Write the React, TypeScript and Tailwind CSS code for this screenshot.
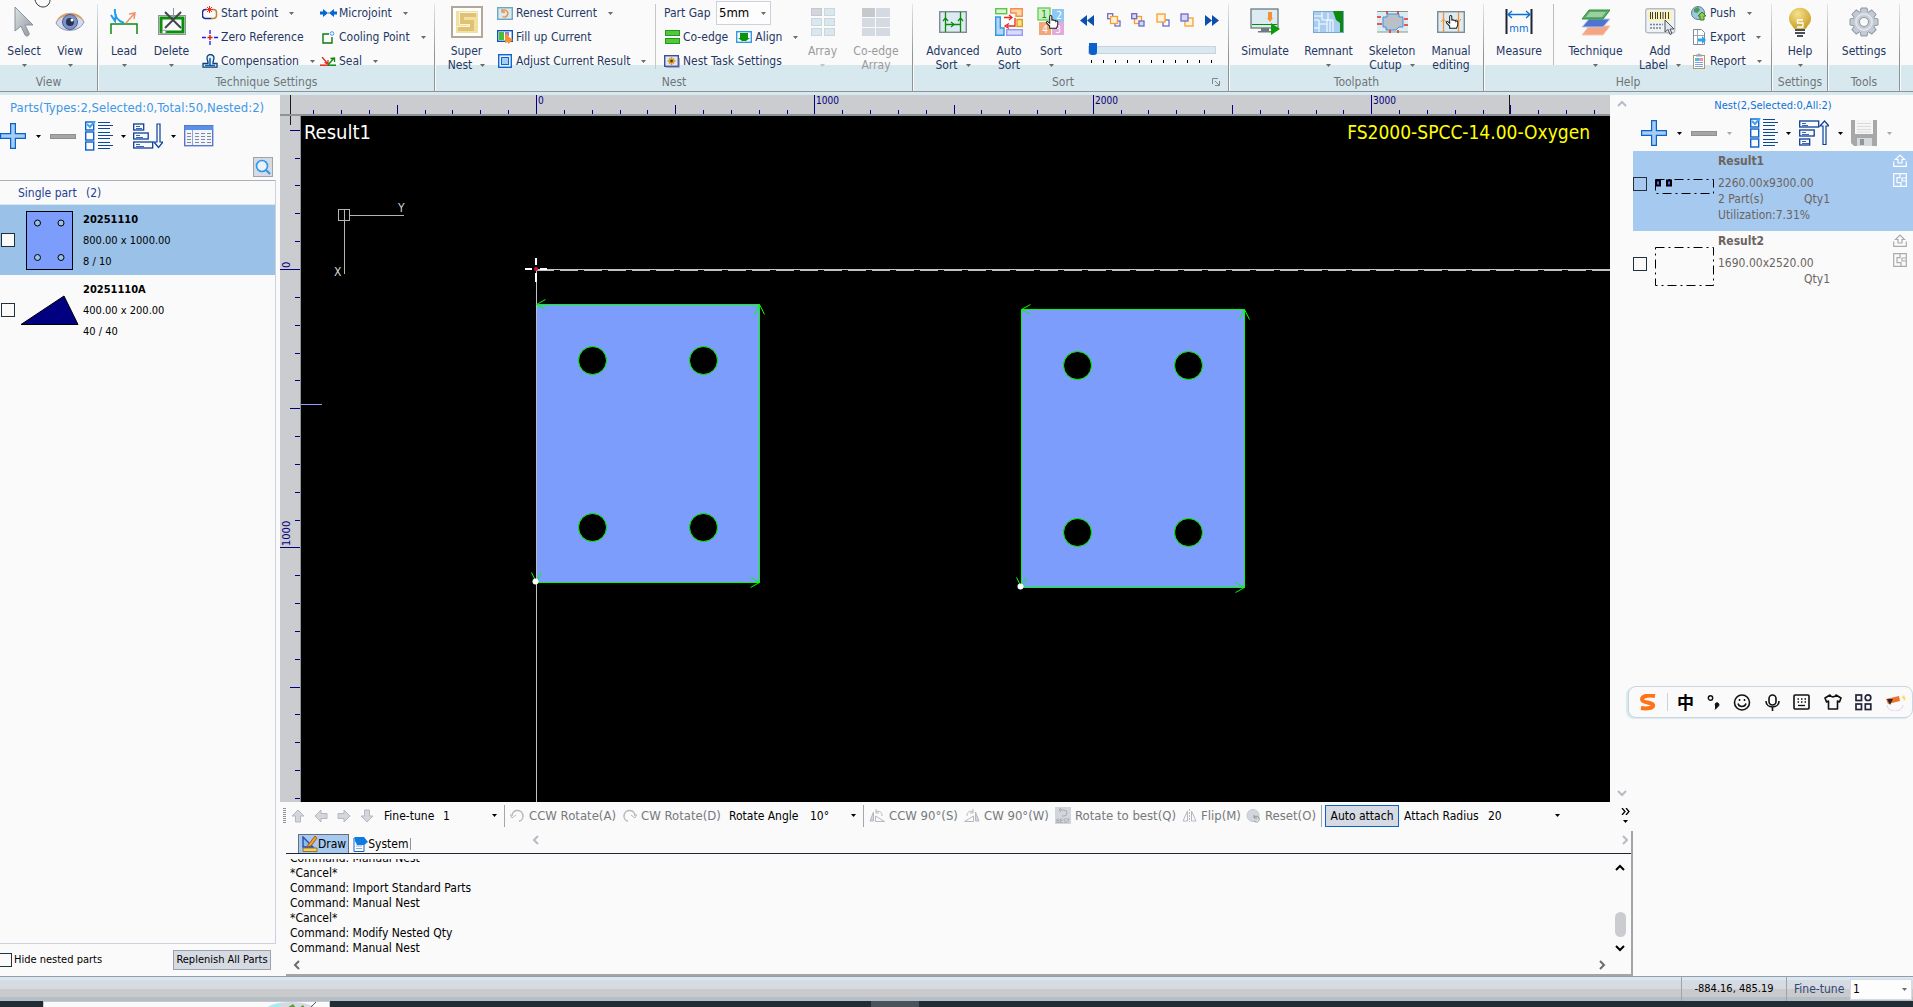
import React, { useId, useState } from 'react';

type Kids = { children?: React.ReactNode };

function Pic({ w, h, children }: { w: number; h: number } & Kids) {
  return (
    <svg width={w} height={h} viewBox={`0 0 ${w} ${h}`} fill="none" className="shrink-0" aria-hidden="true">
      {children}
    </svg>
  );
}

function Caret({ tone = 'text-[#6b6b6b]' }: { tone?: string }) {
  return (
    <svg width="5" height="3" viewBox="0 0 5 3" className={`shrink-0 ${tone}`} aria-hidden="true">
      <path d="M0 0h5L2.500 3z" fill="currentColor" />
    </svg>
  );
}

/* ---------- ribbon icons ---------- */

const CursorIcon = () => (
  <Pic w={20} h={32}>
    <defs>
      <linearGradient id="cur" x1="0" y1="0" x2="1" y2="1">
        <stop offset="0" stopColor="#dfe3e6" />
        <stop offset="1" stopColor="#8d959c" />
      </linearGradient>
    </defs>
    <path d="M1 1v24l6-5 4 9c1 2 5 1 4-2l-4-8h8z" fill="url(#cur)" stroke="#8a929a" />
  </Pic>
);

const EyeIcon = () => (
  <Pic w={30} h={24}>
    <path d="M1 13C6 2 23 1 29 12 25 22 7 24 1 13z" fill="#d5d9ee" stroke="#8c93b8" />
    <path d="M1 12C6 0 24 0 29 11 22 4 8 4 1 12z" fill="#d9a067" />
    <circle cx="15" cy="12" r="7.500" fill="#7c93c4" stroke="#4e5f92" />
    <circle cx="15" cy="12" r="4" fill="#26325c" />
    <circle cx="17" cy="10" r="1.500" fill="#fff" />
  </Pic>
);

const LeadIcon = () => (
  <Pic w={28} h={26}>
    <path d="M1 25V15h26v10" stroke="#0d8a0d" strokeWidth="1.500" />
    <path d="M5 0c-1 7 3 12 9 14M1 6l4 6 1-7" stroke="#1e9bf0" strokeWidth="2" />
    <path d="M16 14l8-9M19 5l6-1-1 6" stroke="#f0906a" strokeWidth="1.500" />
  </Pic>
);

const DeleteIcon = () => (
  <Pic w={30} h={28}>
    <rect x="1.500" y="7.500" width="27" height="19" stroke="#8e9499" />
    <rect x="4" y="10" width="22" height="14" stroke="#0a8f0a" strokeWidth="3" />
    <path d="M16.500 0v10" stroke="#8e9499" />
    <path d="M8 4l16 16M24 4L8 20" stroke="#3d464d" strokeWidth="2" />
    <circle cx="7" cy="24" r="2" fill="#fff" stroke="#8e9499" />
  </Pic>
);

const StartPointIcon = () => (
  <Pic w={16} h={14}>
    <path d="M5 3.500H3.500a3 3 0 0 0-3 3v3a3 3 0 0 0 3 3h6" stroke="#1b2f9a" strokeWidth="1.500" />
    <path d="M10 3.500h1.500a3 3 0 0 1 3 3v3a3 3 0 0 1-3 3H9" stroke="#b98a2c" strokeWidth="1.500" />
    <path d="M7.500 0v7M4 3.500h7M5 1l5 5M10 1L5 6" stroke="#f0281c" />
  </Pic>
);

const ZeroIcon = () => (
  <Pic w={16} h={15}>
    <path d="M8 0v4M8 11v4M0 7.500h4M12 7.500h4" stroke="#1a1aff" strokeWidth="1.300" />
    <path d="M8 5v5M5.500 7.500h5" stroke="#e81c1c" strokeWidth="1.500" />
  </Pic>
);

const CompensationIcon = () => (
  <Pic w={16} h={14}>
    <path d="M1 13.200h14V9.500h-4c0-3 1-4 1-5.500a3.500 3.500 0 0 0-7 0C5 5.500 6 6.500 6 9.500H1z" stroke="#0e3f78" strokeWidth="1.300" fill="#e3f1fb" />
    <path d="M3 11.500h10M8 11V4" stroke="#0e5fb0" strokeWidth="1.500" />
  </Pic>
);

const MicrojointIcon = () => (
  <Pic w={17} h={8}>
    <path d="M0 4h4M13 4h4" stroke="#0067d6" strokeWidth="3" />
    <path d="M3 0l5 4-5 4zM14 0L9 4l5 4z" fill="#0067d6" />
    <path d="M8 4h1" stroke="#f5a34b" strokeWidth="2" />
  </Pic>
);

const CoolingIcon = () => (
  <Pic w={17} h={13}>
    <path d="M9 3H3v9h9V6" stroke="#0d7a0d" strokeWidth="1.400" />
    <circle cx="12" cy="2.500" r="1.800" stroke="#3d9bf0" />
  </Pic>
);

const SealIcon = () => (
  <Pic w={17} h={9}>
    <path d="M0 8.200h8" stroke="#e8281c" strokeWidth="1.500" />
    <path d="M8 8.200h8" stroke="#0d8a0d" strokeWidth="1.500" />
    <path d="M2 0l6 7M4.500 5.500L8 7l0-4" stroke="#e8281c" strokeWidth="1.300" />
    <path d="M8 8l6-7M10.500 1.500L14.500 1v4" stroke="#0d8a0d" strokeWidth="1.300" />
  </Pic>
);

const SuperNestIcon = () => (
  <Pic w={32} h={32}>
    <rect x="1" y="1" width="30" height="30" fill="#fff" stroke="#b3a79c" strokeWidth="2" />
    <rect x="5" y="5" width="22" height="22" fill="#f3e0a0" />
    <path d="M25 9H11v7h10v7H7" stroke="#dfc274" strokeWidth="4" />
    <path d="M26 6.500H8.500v12h10v2H6" stroke="#fdf5d8" />
  </Pic>
);

const RenestIcon = () => (
  <Pic w={16} h={13}>
    <rect x=".7" y=".7" width="14.600" height="11.600" fill="#d9e9f0" stroke="#6aa9c4" strokeWidth="1.400" />
    <path d="M5.500 3.500a3.500 3.500 0 1 1 0 6M5 2v3h3" stroke="#f08a3c" strokeWidth="1.300" />
  </Pic>
);

const FillUpIcon = () => (
  <Pic w={16} h={14}>
    <rect x=".7" y=".7" width="14.600" height="10.600" fill="#fff" stroke="#0b55b5" strokeWidth="1.400" />
    <path d="M2 2h5v8H2z" fill="#49bf38" />
    <path d="M8 2h4v4H8z" fill="#8c7bea" />
    <path d="M8 5l3-2v9l-3 1zM11 6l5 4-5 4z" fill="#f59034" />
  </Pic>
);

const AdjustIcon = () => (
  <Pic w={16} h={14}>
    <rect x="1.700" y=".7" width="12.600" height="12.600" fill="#e8f2fc" stroke="#1166cc" strokeWidth="1.400" />
    <rect x="4.500" y="3.500" width="7" height="7" fill="#a6cdf2" stroke="#1166cc" />
  </Pic>
);

const CoEdgeIcon = () => (
  <Pic w={15} h={14}>
    <rect x=".5" y=".5" width="14" height="5" fill="#54c83a" stroke="#1f9a1f" />
    <rect x=".5" y="8.500" width="14" height="5" fill="#54c83a" stroke="#1f9a1f" />
  </Pic>
);

const AlignIcon = () => (
  <Pic w={16} h={12}>
    <rect x=".7" y=".7" width="14.600" height="10.600" fill="#fff" stroke="#2f97ea" strokeWidth="1.400" />
    <path d="M4 2h8v5h2l-4 3H6L2 7h2z" fill="#0a940a" />
  </Pic>
);

const NestTaskIcon = () => (
  <Pic w={16} h={13}>
    <rect x=".7" y=".7" width="13.600" height="10.600" fill="#dfe6f5" stroke="#3c4e9a" strokeWidth="1.400" />
    <path d="M2 12.300h13.300V3" stroke="#8f99c0" />
    <path d="M7.500 2v8M3.500 6h8M5 3.500l5 5M10 3.500l-5 5" stroke="#d79a1c" strokeWidth="1.600" />
    <circle cx="7.500" cy="6" r="1.300" fill="#5a3a10" />
  </Pic>
);

const ArrayIcon = () => (
  <Pic w={24} h={28}>
    <rect x=".5" y=".5" width="10" height="7" fill="#d3d6dc" stroke="#c4c8cf" />
    <rect x="13.500" y=".5" width="10" height="7" fill="#d7e9ee" stroke="#ccd6dc" />
    <rect x=".5" y="10.500" width="10" height="7" fill="#d7e9ee" stroke="#ccd6dc" />
    <rect x="13.500" y="10.500" width="10" height="7" fill="#d7e9ee" stroke="#ccd6dc" />
    <rect x=".5" y="20.500" width="10" height="7" fill="#d7e9ee" stroke="#ccd6dc" />
    <rect x="13.500" y="20.500" width="10" height="7" fill="#d7e9ee" stroke="#ccd6dc" />
  </Pic>
);

const CoEdgeArrayIcon = () => (
  <Pic w={28} h={28}>
    <path d="M0 0h28v28H0z" fill="#d5d9e2" />
    <path d="M0 0h14v9H0z" fill="#c6c8cc" />
    <path d="M13.500 0v28M0 9.500h28M0 19.500h28" stroke="#fafafa" />
  </Pic>
);

const AdvSortIcon = () => (
  <Pic w={28} h={22}>
    <rect x=".7" y=".7" width="26.600" height="20.600" fill="#dcebf1" stroke="#7e8a92" strokeWidth="1.400" />
    <path d="M6.500 1v20M21.500 1v20M6 13.500h15" stroke="#0d8a0d" strokeWidth="1.300" />
    <path d="M4 10l2.500-3L9 10M19 10l2.500-3 2.500 3M12 11l3 2.500-3 2.500" stroke="#0d8a0d" strokeWidth="1.200" />
  </Pic>
);

const AutoSortIcon = () => (
  <Pic w={28} h={28}>
    <rect x=".7" y=".7" width="11" height="5" fill="#d7f5d0" stroke="#5cc84a" strokeWidth="1.400" />
    <path d="M15.700.7h11.600v7.600H21V5h-5.300z" fill="#ffd3a8" stroke="#f58f4a" strokeWidth="1.400" />
    <path d="M.7 9h4.600v11H9v7.300H.7z" fill="#b5d6f5" stroke="#2f97ea" strokeWidth="1.400" />
    <rect x="22" y="11.500" width="5.300" height="7" fill="#ffe08a" stroke="#d9a01c" strokeWidth="1.400" />
    <rect x="11.700" y="21.700" width="15.600" height="5.600" fill="#d8dcf8" stroke="#9a9af0" strokeWidth="1.400" />
    <path d="M9 9.500h8M14 7l3 2.500-3 2.500M20 10v8h-8M14 15.500L10 18l4 2.500" stroke="#e8281c" strokeWidth="1.300" />
  </Pic>
);

const HandShape = () => (
  <path
    d="M5.500 15.500V13L2 9.500c-1-1.500.5-2.500 1.700-1.500L5.500 9.500V2c0-2 2.500-2 2.500 0v4.500c.5-1.500 2.500-1.200 2.500.3.500-1 2.300-.8 2.300.6.700-.8 2.200-.3 2.200 1V12l-1.500 3.500z"
    fill="#fff"
    stroke="#1c1c1c"
    strokeWidth="1.200"
  />
);

const SortIcon = () => (
  <Pic w={28} h={30}>
    <rect x="15" y="2" width="12" height="13" fill="#8cc8f2" />
    <rect x="2" y="15" width="12" height="13" fill="#f0a878" />
    <rect x="15" y="15" width="12" height="13" fill="#e3a8dc" />
    <rect x="1" y="1" width="12" height="12" fill="#c8f0c0" stroke="#6ad05a" strokeWidth="1.400" />
    <g fontSize="10" textAnchor="middle">
      <text x="7" y="11" fill="#1c8a1c">1</text>
      <text x="22" y="12" fill="#fff">2</text>
      <text x="8" y="26" fill="#fff">4</text>
      <text x="21" y="26" fill="#fff">3</text>
    </g>
    <g transform="translate(8 8) scale(.85)"><HandShape /></g>
  </Pic>
);

const SimulateIcon = () => (
  <Pic w={30} h={28}>
    <rect x="1" y="1" width="27" height="19" fill="#dcebf1" stroke="#6f7a82" strokeWidth="1.300" />
    <path d="M2 16.500h25" stroke="#0d8a0d" />
    <path d="M18 4h4v6h-4zM17 10h6l-3 4z" fill="#f59034" />
    <path d="M11 20h8v3h-8zM8 23h14v1.500H8z" fill="#6f7a82" />
    <path d="M21 15l9 6-9 6z" fill="#0d9a0d" />
  </Pic>
);

const RemnantIcon = () => (
  <Pic w={31} h={22}>
    <rect x=".5" y=".5" width="30" height="21" fill="#a9cdf0" stroke="#7aa7d0" />
    <path d="M20 0h10v21h-3V12l-4-3z" fill="#0d8a0d" />
    <path d="M1 5h8V1M9 5v4h6V2M1 9h5v12M6 13h8v8M14 13V9h6v12M1 17h5M17 9v12" stroke="#fff" />
  </Pic>
);

const SkeletonIcon = () => (
  <Pic w={31} h={22}>
    <path d="M0 .7h31v20H0z" fill="#dcebf1" />
    <path d="M0 .5h31M0 21h31" stroke="#7d9a8a" />
    <path d="M6 6h4V3h12v3h4v10h-4l-3 3H9V16H6z" fill="#b9c0c8" stroke="#3f8fe0" />
    <path d="M0 6h4M0 13h5M27 8h4M27 14h4M10 0v3M21 19v3M13 19v3M21 0v3" stroke="#e8281c" strokeWidth="1.500" />
  </Pic>
);

const ManualIcon = () => (
  <Pic w={28} h={22}>
    <rect x=".7" y=".7" width="26.600" height="20.600" fill="#dcebf1" stroke="#7e8a92" strokeWidth="1.400" />
    <path d="M6.500 1v20M21.500 1v20" stroke="#f59034" strokeWidth="1.300" />
    <path d="M4 11l2.500-3L9 11M19 8l2.500 3L24 8" stroke="#f59034" />
    <g transform="translate(8 4) scale(.85)"><HandShape /></g>
  </Pic>
);

const MeasureIcon = () => (
  <Pic w={28} h={26}>
    <path d="M1.500 0v25M26.500 0v25" stroke="#1c2530" strokeWidth="2" />
    <path d="M3 5.500h22M7 2L3 5.500 7 9M21 2l4 3.500L21 9" stroke="#0b6fd6" strokeWidth="1.300" />
    <text x="14" y="23" fontSize="11" fill="#0b6fd6" textAnchor="middle">mm</text>
  </Pic>
);

const LayersIcon = () => (
  <Pic w={30} h={27}>
    <path d="M8 17h21l-7 9H1z" fill="#f5a583" stroke="#f2c6b2" />
    <path d="M8 10h21l-7 8H1z" fill="#4f74cf" stroke="#b9c8ef" />
    <path d="M8 1h21l-7 9H1z" fill="#58ad62" stroke="#2f8f43" />
    <path d="M9 3h16l-4 5H5z" fill="#9ad0a0" />
  </Pic>
);

const AddLabelIcon = () => (
  <Pic w={31} h={28}>
    <rect x=".7" y=".7" width="29" height="24" rx="2" fill="#eef2f5" stroke="#b5bcc4" strokeWidth="1.400" />
    <rect x="3" y="3" width="24" height="10" fill="#fbf2b8" />
    <path d="M5.500 4v7M7.500 4v7M10.500 4v7M12.500 4v7M15.500 4v7M18 4v7M20.500 4v7M23.500 4v7" stroke="#3a3a3a" />
    <path d="M5 16.500h13M5 20h12" stroke="#6d8798" strokeWidth="1.500" strokeDasharray="2 1" />
    <path d="M20 12v12l3-2.500 2 5 2-1-2-4.500h4z" fill="#e3e6ea" stroke="#4a525a" />
  </Pic>
);

const PushIcon = () => (
  <Pic w={16} h={15}>
    <circle cx="7" cy="7" r="6.500" fill="#9cc7e0" stroke="#5a7f95" />
    <path d="M3 3l4-2 2 3-3 3-3-1zM8 8l4-1 1 3-3 3z" fill="#4f9a4a" />
    <path d="M11 6l4 4h-2v4h-4v-4H7z" fill="#8ccf4d" stroke="#3e7a24" />
  </Pic>
);

const ExportIcon = () => (
  <Pic w={16} h={16}>
    <path d="M2.500.5h8l3 3v12h-11z" fill="#fff" stroke="#7f8a96" />
    <path d="M3 6.500h10M6.500 1v14" stroke="#9aa5b5" />
    <path d="M7 9.500h4V7l4 4-4 4v-2.500H7z" fill="#27a5ee" />
  </Pic>
);

const ReportIcon = () => (
  <Pic w={14} h={16}>
    <rect x="1.500" y="2.500" width="11" height="13" fill="#fff" stroke="#b09a5c" />
    <path d="M4 3.500h6V1.500H8L7 0 6 1.500H4z" fill="#9aa2aa" />
    <path d="M3 5h4v3H3z" fill="#3fc6e0" /><path d="M7 5h4v3H7z" fill="#ee8fd0" />
    <path d="M3 9.500h8M3 11.500h8M3 13.500h8" stroke="#7fa4dd" />
  </Pic>
);

const BulbIcon = () => (
  <Pic w={24} h={31}>
    <defs>
      <radialGradient id="bulb" cx=".4" cy=".3" r=".8">
        <stop offset="0" stopColor="#f5e28c" /><stop offset="1" stopColor="#c79a1c" />
      </radialGradient>
    </defs>
    <path d="M12 .7a11 11 0 0 1 11 11c0 5-4 7-5 10H6c-1-3-5-5-5-10A11 11 0 0 1 12 .7z" fill="url(#bulb)" />
    <path d="M15 13H9.500v3H15v4H9" stroke="#fff" strokeWidth="1.300" />
    <path d="M7 23h10M7 26h10M9 29h6" stroke="#4a4f55" strokeWidth="2" />
  </Pic>
);

const GearIcon = () => (
  <Pic w={30} h={30}>
    <g fill="#c3cad3" stroke="#8f98a4">
      {[0, 45, 90, 135].map((a) => (
        <path key={a} d="M12 1h6l1 5v18l-1 5h-6l-1-5V6z" transform={`rotate(${a} 15 15)`} />
      ))}
    </g>
    <circle cx="15" cy="15" r="10.500" fill="#c3cad3" />
    <circle cx="15" cy="15" r="8" stroke="#dfe4ea" strokeWidth="2" />
    <circle cx="15" cy="15" r="4.500" fill="#fafafa" stroke="#8f98a4" />
  </Pic>
);

/* ---------- ribbon building blocks ---------- */

function Big({ w, icon, label, second, caret, disabled }: { w: string; icon: React.ReactNode; label: string; second?: string; caret?: boolean; disabled?: boolean }) {
  return (
    <button type="button" disabled={disabled} className={`flex shrink-0 flex-col items-center whitespace-nowrap leading-[14px] ${w} ${disabled ? 'text-[#9a9a9a]' : 'text-[#1f3864]'}`}>
      <span className="flex h-11 items-center justify-center">{icon}</span>
      <span>{label}</span>
      <span className="flex h-[14px] items-center gap-2">
        {second && <span>{second}</span>}
        {caret && <Caret tone={disabled ? 'text-[#c4c4c4]' : 'text-[#6b6b6b]'} />}
      </span>
    </button>
  );
}

function Small({ icon, label, caret }: { icon: React.ReactNode; label: string; caret?: boolean }) {
  return (
    <button type="button" className="flex h-6 items-center whitespace-nowrap text-[#1f3864]">
      <span className="mr-[3px] flex w-4 shrink-0 justify-center">{icon}</span>
      <span>{label}</span>
      {caret && <span className="ml-[11px]"><Caret /></span>}
    </button>
  );
}

function Group({ w, label, extra, children }: { w: string; label: string; extra?: React.ReactNode } & Kids) {
  return (
    <section aria-label={label} className={`flex shrink-0 ${w}`}>
      <div className="flex min-w-0 flex-1 flex-col bg-[linear-gradient(to_bottom,#fafafa_65px,#d7e9ee_65px)]">
        <div className="flex h-[73px]">{children}</div>
        <div className="flex h-[18px] items-center justify-center text-[#6f7479]">
          <span className={extra ? 'flex-1 text-center' : ''}>{label}</span>
          {extra}
        </div>
      </div>
      <div className="mr-px mt-1 w-px bg-[linear-gradient(to_bottom,#dfe8ec,#8f9296_60%)]" />
    </section>
  );
}

const Tiles = ({ back, two }: { back?: boolean; two?: boolean }) => (
  <Pic w={14} h={14}>
    {two && back ? (
      <>
        <rect x="3.500" y="3.500" width="7" height="7" fill="#fff3d8" stroke="#f5a030" strokeWidth="1.300" />
        <rect x=".7" y=".7" width="5" height="5" fill="#d8d8f5" stroke="#6a6ad0" strokeWidth="1.300" />
        <rect x="8" y="8" width="5" height="5" fill="#d8d8f5" stroke="#6a6ad0" strokeWidth="1.300" />
      </>
    ) : two ? (
      <>
        <rect x=".7" y=".7" width="5" height="5" fill="#fff" stroke="#6a6ad0" strokeWidth="1.300" />
        <rect x="8" y="8" width="5" height="5" fill="#fff" stroke="#6a6ad0" strokeWidth="1.300" />
        <rect x="3.500" y="3.500" width="7" height="7" fill="#fff3d8" stroke="#f5a030" strokeWidth="1.300" />
      </>
    ) : back ? (
      <>
        <rect x="5" y="5" width="8" height="8" fill="#fff3d8" stroke="#f5a030" strokeWidth="1.300" />
        <rect x="1" y="1" width="7" height="7" fill="#d8d8f5" stroke="#6a6ad0" strokeWidth="1.300" />
      </>
    ) : (
      <>
        <rect x="7" y="7" width="6" height="6" fill="#fff" stroke="#6a6ad0" strokeWidth="1.300" />
        <rect x="1" y="1" width="8" height="8" fill="#fff3d8" stroke="#f5a030" strokeWidth="1.300" />
      </>
    )}
  </Pic>
);

const Double = ({ right }: { right?: boolean }) => (
  <Pic w={14} h={11}>
    <path d={right ? 'M0 0l7 5.500L0 11zM7 0l7 5.500L7 11z' : 'M7 0L0 5.500 7 11zM14 0L7 5.500l7 5.500z'} fill="#0b4fb0" />
  </Pic>
);

function Choice({ label, labelClass, value, className, tone }: { label: string; labelClass: string; value: string; className: string; tone?: string }) {
  const id = useId();
  return (
    <>
      <label htmlFor={id} className={`shrink-0 whitespace-nowrap ${labelClass}`}>{label}</label>
      <span className={`relative flex shrink-0 items-center ${className}`}>
        <select id={id} defaultValue={value} className="h-full w-full appearance-none bg-transparent outline-none">
          <option>{value}</option>
        </select>
        <span className="pointer-events-none absolute right-1"><Caret tone={tone ?? 'text-black'} /></span>
      </span>
    </>
  );
}

function Ribbon() {
  return (
    <header className="flex h-[92px] overflow-hidden border-b border-[#8f9296] bg-[#fafafa] text-[12px]">
      <Group w="w-[99px]" label="View">
        <Big w="w-12" icon={<CursorIcon />} label="Select" caret />
        <Big w="w-11" icon={<EyeIcon />} label="View" caret />
      </Group>
      <Group w="w-[337px]" label="Technique Settings">
        <Big w="w-[50px]" icon={<LeadIcon />} label="Lead" caret />
        <Big w="w-[45px]" icon={<DeleteIcon />} label="Delete" caret />
        <div className="ml-2 flex w-[118px] flex-col items-start pt-px">
          <Small icon={<StartPointIcon />} label="Start point" caret />
          <Small icon={<ZeroIcon />} label="Zero Reference" />
          <Small icon={<CompensationIcon />} label="Compensation" caret />
        </div>
        <div className="flex flex-col items-start pt-px">
          <Small icon={<MicrojointIcon />} label="Microjoint" caret />
          <Small icon={<CoolingIcon />} label="Cooling Point" caret />
          <Small icon={<SealIcon />} label="Seal" caret />
        </div>
      </Group>
      <Group w="w-[478px]" label="Nest">
        <Big w="w-[61px]" icon={<SuperNestIcon />} label="Super" second="Nest" caret />
        <div className="flex w-[158px] flex-col items-start pt-px">
          <Small icon={<RenestIcon />} label="Renest Current" caret />
          <Small icon={<FillUpIcon />} label="Fill up Current" />
          <Small icon={<AdjustIcon />} label="Adjust Current Result" caret />
        </div>
        <div className="my-1 mr-2 w-px bg-[#c3c8cc]" />
        <div className="flex w-[136px] flex-col pt-px text-[#1f3864]">
          <div className="flex h-6 items-center">
            <Choice label="Part Gap" labelClass="w-[52px]" value="5mm" tone="text-[#6b6b6b]" className="h-6 w-[55px] border border-[#ccd2dc] bg-[#fdfdfd] pl-[2px] text-[13px] text-black" />
          </div>
          <div className="flex gap-2">
            <Small icon={<CoEdgeIcon />} label="Co-edge" />
            <Small icon={<AlignIcon />} label="Align" caret />
          </div>
          <div className="flex"><Small icon={<NestTaskIcon />} label="Nest Task Settings" /></div>
        </div>
        <Big w="w-[45px]" icon={<ArrayIcon />} label="Array" caret disabled />
        <Big w="w-[62px]" icon={<CoEdgeArrayIcon />} label="Co-edge" second="Array" disabled />
      </Group>
      <Group
        w="w-[316px]"
        label="Sort"
        extra={
          <button type="button" aria-label="Sort options" className="mr-2">
            <Pic w={8} h={8}><path d="M.5 6V.5H6M3 3l4 4M7.500 3v4.500H3" stroke="#7f858a" /></Pic>
          </button>
        }
      >
        <Big w="w-[78px]" icon={<AdvSortIcon />} label="Advanced" second="Sort" caret />
        <Big w="w-[34px]" icon={<AutoSortIcon />} label="Auto" second="Sort" />
        <Big w="w-[50px]" icon={<SortIcon />} label="Sort" caret />
        <div className="ml-1 flex w-[139px] flex-col">
          <div className="flex h-10 items-center justify-between">
            <button type="button" aria-label="First" className="mr-[2px]"><Double /></button>
            <button type="button" aria-label="Back one step"><Tiles two /></button>
            <button type="button" aria-label="Back"><Tiles two back /></button>
            <button type="button" aria-label="Forward"><Tiles /></button>
            <button type="button" aria-label="Forward one step"><Tiles back /></button>
            <button type="button" aria-label="Last"><Double right /></button>
          </div>
          <input
            type="range"
            aria-label="Sort position"
            min="0"
            max="10"
            defaultValue="0"
            className="ml-2 mt-[3px] h-[13px] w-[128px] appearance-none bg-transparent [&::-webkit-slider-runnable-track]:h-2 [&::-webkit-slider-runnable-track]:border [&::-webkit-slider-runnable-track]:border-[#ccd2dc] [&::-webkit-slider-runnable-track]:bg-[#d7e9ee] [&::-webkit-slider-thumb]:mt-[-4px] [&::-webkit-slider-thumb]:h-3 [&::-webkit-slider-thumb]:w-2 [&::-webkit-slider-thumb]:appearance-none [&::-webkit-slider-thumb]:rounded-b-[3px] [&::-webkit-slider-thumb]:bg-[#0b62cc]"
          />
          <div className="ml-[11px] mt-1 flex w-[121px] justify-between">
            {Array.from({ length: 11 }, (_, i) => <span key={i} className="h-[3px] w-px bg-black" />)}
          </div>
        </div>
      </Group>
      <Group w="w-[255px]" label="Toolpath">
        <Big w="w-[70px]" icon={<SimulateIcon />} label="Simulate" />
        <Big w="w-[57px]" icon={<RemnantIcon />} label="Remnant" caret />
        <Big w="w-[70px]" icon={<SkeletonIcon />} label="Skeleton" second="Cutup" caret />
        <Big w="w-12" icon={<ManualIcon />} label="Manual" second="editing" />
      </Group>
      <Group w="w-[288px]" label="Help">
        <Big w="w-[68px]" icon={<MeasureIcon />} label="Measure" />
        <div className="mb-2 mt-1 w-px bg-[#b9bec2]" />
        <Big w="w-[83px]" icon={<LayersIcon />} label="Technique" caret />
        <Big w="w-[46px]" icon={<AddLabelIcon />} label="Add" second="Label" caret />
        <div className="ml-2 flex flex-col items-start pt-px">
          <Small icon={<PushIcon />} label="Push" caret />
          <Small icon={<ExportIcon />} label="Export" caret />
          <Small icon={<ReportIcon />} label="Report" caret />
        </div>
      </Group>
      <Group w="w-[56px]" label="Settings">
        <Big w="w-[54px]" icon={<BulbIcon />} label="Help" caret />
      </Group>
      <Group w="w-[72px]" label="Tools">
        <Big w="w-[70px]" icon={<GearIcon />} label="Settings" />
      </Group>
      <div className="flex-1 bg-[linear-gradient(to_bottom,#fafafa_65px,#d7e9ee_65px)]" />
    </header>
  );
}

/* ---------- side-panel icons ---------- */

const Plus = () => (
  <Pic w={26} h={26}><path d="M10.600.6h4.800v10h10v4.800h-10v10h-4.800v-10h-10v-4.800h10z" fill="#a6cdf2" stroke="#0b62cc" strokeWidth="1.200" /></Pic>
);
const Minus = () => <Pic w={26} h={5}><rect x=".5" y=".5" width="25" height="4" fill="#a6a6a6" stroke="#909090" /></Pic>;
const Checklist = () => (
  <Pic w={28} h={30}>
    {[1, 11, 21].map((y) => (
      <g key={y}>
        <rect x=".7" y={y} width="8" height="8" stroke="#0b62cc" strokeWidth="1.400" />
        <path d={`M13 ${y + 0.5}h12M13 ${y + 3.5}h15M13 ${y + 6.5}h12`} stroke="#0b4a94" />
      </g>
    ))}
    <path d="M2 3l3 3 5-6" stroke="#3fa3ee" strokeWidth="2" />
  </Pic>
);
const SortBars = ({ up }: { up?: boolean }) => (
  <Pic w={30} h={26}>
    {[0, 1, 2].map((i) => {
      const w = up ? 19 - i * 4.5 : 10 + i * 4.5;
      return (
        <g key={i} stroke="#0b3f9c">
          <rect x=".7" y={1 + i * 9} width={w} height="6" strokeWidth="1.300" />
          <path d={`M3 ${3.5 + i * 9}h4M3 ${5.5 + i * 9}h${6 + i}`} strokeWidth=".8" />
        </g>
      );
    })}
    {up ? (
      <path d="M24 24.500V6h-3l4.500-5L30 6h-3v18.500z" stroke="#0b3f9c" strokeWidth="1.200" />
    ) : (
      <path d="M24 1v18h-3l4.500 5.500L30 19h-3V1z" stroke="#0b3f9c" strokeWidth="1.200" />
    )}
  </Pic>
);
const TableIcon = () => (
  <Pic w={30} h={22}>
    <rect x=".7" y=".7" width="28" height="20" fill="#f2f5fb" stroke="#5a78c8" strokeWidth="1.400" />
    <path d="M1 1h28v4H1z" fill="#5a8fea" />
    <path d="M8.500 5v15" stroke="#8fa3d8" />
    <path d="M3 8.500h4M3 11.500h4M3 14.500h4M3 17.500h4M11 8.500h4M17 8.500h4M23 8.500h4M11 11.500h4M17 11.500h4M23 11.500h4M11 14.500h4M17 14.500h4M23 14.500h4M11 17.500h4M17 17.500h4M23 17.500h4" stroke="#7f8798" />
  </Pic>
);
const SaveIcon = () => (
  <Pic w={26} h={26}>
    <path d="M0 0h26v26H3l-3-3z" fill="#a8a8a8" />
    <path d="M4 0h18v14H4z" fill="#f6f6f6" />
    <path d="M6 3.500h14M6 6.500h14M6 9.500h14M6 12h14" stroke="#dadada" />
    <path d="M6 18h15v8H6z" fill="#d3d9dd" />
    <path d="M9 19h4v6H9z" fill="#8f979c" />
  </Pic>
);

const CheckBox = ({ label }: { label: string }) => (
  <input type="checkbox" aria-label={label} className="h-[14px] w-[14px] shrink-0 appearance-none border border-[#23303a] bg-transparent checked:bg-[#0b62cc]" />
);

function ToolDrop({ label, gap = 'w-[24px]', tone = 'text-black', children }: { label: string; gap?: string; tone?: string } & Kids) {
  return (
    <button type="button" aria-label={label} className="flex h-8 shrink-0 items-center">
      {children}
      <span className={`flex justify-center ${gap}`}><Caret tone={tone} /></span>
    </button>
  );
}

function PartsPanel() {
  return (
    <aside className="flex w-[276px] shrink-0 flex-col overflow-hidden">
      <h2 className="h-[25px] pl-[10px] text-[13px] leading-[26px] text-[#3f97e8]">Parts(Types:2,Selected:0,Total:50,Nested:2)</h2>
      <div className="flex h-8 items-center">
        <ToolDrop label="Add part"><Plus /></ToolDrop>
        <button type="button" aria-label="Remove part" className="mr-[9px]"><Minus /></button>
        <ToolDrop label="Select parts" gap="w-5"><Checklist /></ToolDrop>
        <ToolDrop label="Sort parts" gap="w-[21px]"><SortBars /></ToolDrop>
        <button type="button" aria-label="Table view"><TableIcon /></button>
      </div>
      <div className="flex justify-end pr-[3px] pt-[5px] pb-[3px]">
        <button type="button" aria-label="Search" className="flex h-5 w-5 items-center justify-center border border-[#a0a4a8] bg-[#d5dae3]">
          <Pic w={16} h={16}><circle cx="7" cy="7" r="5.500" stroke="#2f97ea" strokeWidth="1.600" fill="#eaf3fb" /><path d="M11 11l4 4" stroke="#2f97ea" strokeWidth="2" /></Pic>
        </button>
      </div>
      <div className="flex min-h-0 flex-1 flex-col border-r border-b border-t border-[#ccd2dc] border-t-[#a9b2ba] text-[11px]">
        <div className="flex h-6 items-center gap-3 border-b border-[#d7e9ee] pl-[18px] text-[12px] text-[#1f3f94]">
          <span className="w-14 whitespace-nowrap">Single part</span><span>(2)</span>
        </div>
        <ul>
          <li className="flex h-[70px] items-center bg-[#9ac1e8] pl-px">
            <span className="flex bg-[#fafafa]"><CheckBox label="20251110" /></span>
            <span className="ml-[11px] mr-[10px] flex">
              <Pic w={47} h={59}>
                <rect x=".5" y=".5" width="46" height="58" fill="#7d9dfd" stroke="#000" />
                {[[11.5, 12], [35, 12], [11.5, 46.5], [35, 46.5]].map(([x, y]) => <circle key={`${x}-${y}`} cx={x} cy={y} r="3" fill="#9ac1e8" stroke="#000" />)}
              </Pic>
            </span>
            <PartText name="20251110" size="800.00 x 1000.00" count="8 / 10" />
          </li>
          <li className="flex h-[70px] items-center pl-px">
            <CheckBox label="20251110A" />
            <span className="mr-1 ml-[5px] flex">
              <Pic w={59} h={30}><path d="M1 29.500L44 1l14 28.500z" fill="#000080" stroke="#000" /></Pic>
            </span>
            <PartText name="20251110A" size="400.00 x 200.00" count="40 / 40" />
          </li>
        </ul>
      </div>
      <div className="flex h-8 items-center justify-between pr-[5px] text-[11px]">
        <label className="flex items-center gap-[2px] whitespace-nowrap">
          <input type="checkbox" className="ml-[-2px] h-[14px] w-[14px] appearance-none border border-[#23303a] checked:bg-[#0b62cc]" />
          Hide nested parts
        </label>
        <button type="button" className="h-5 w-[98px] whitespace-nowrap border border-[#9fa3a7] bg-[#d5dae3]">Replenish All Parts</button>
      </div>
    </aside>
  );
}

function PartText({ name, size, count }: { name: string; size: string; count: string }) {
  return (
    <div className="leading-[21px] text-black">
      <div className="font-bold">{name}</div>
      <div>{size}</div>
      <div>{count}</div>
    </div>
  );
}

/* ---------- drawing area ---------- */

const UNIT = 27.84;
const steps = (from: number, to: number) => Array.from({ length: to - from + 1 }, (_, i) => from + i);

function TopRuler() {
  return (
    <svg className="block h-[21px] w-full border-b-2 border-[#8f9296] bg-[#cbcccf]" aria-hidden="true">
      {steps(-8, 38).map((n) => {
        const x = Math.round(256 + n * UNIT);
        const len = n % 10 === 0 ? 20 : n % 5 === 0 ? 10 : 5;
        return (
          <g key={n}>
            <rect x={x} y={20 - len} width="1" height={len} fill="#000080" />
            {n % 10 === 0 && <text x={x + 2} y="9" fontSize="10" fill="#000080">{n * 100}</text>}
          </g>
        );
      })}
      <rect x="10" y="0" width="1" height="20" fill="#1c1c1c" />
      <rect x="1229" y="0" width="1" height="20" fill="#1c1c1c" />
    </svg>
  );
}

function SideRuler() {
  return (
    <svg className="block h-full w-[21px] border-r border-[#8f9296] bg-[#cbcccf]" aria-hidden="true">
      {steps(-5, 19).map((n) => {
        const y = Math.round(153 + n * UNIT);
        const len = n % 10 === 0 ? 20 : n % 5 === 0 ? 10 : 5;
        return (
          <g key={n}>
            <rect x={20 - len} y={y} width={len} height="1" fill="#000080" />
            {n % 10 === 0 && (
              <text transform={`translate(10 ${y - 1}) rotate(-90)`} fontSize="11" fill="#000080">{n * 100}</text>
            )}
          </g>
        );
      })}
      <rect x="10" y="0" width="1" height="9" fill="#1c1c1c" />
    </svg>
  );
}

function Plate({ x, y, leftEdge }: { x: number; y: number; leftEdge: string }) {
  const w = 223;
  const h = 278;
  return (
    <g transform={`translate(${x} ${y})`} fill="none" stroke="#00ff00">
      <rect width={w} height={h} fill="#7d9dfd" stroke="none" />
      <path d={`M0 0H${w}V${h}H0`} />
      <path d={`M0 0V${h}`} stroke={leftEdge} />
      <path d={`M9-5L0 0l9 5M${w - 5} 10l5-10 5 10M${w - 9} ${h - 5}l9 5-9 5M-5 ${h - 10}l5 10 5-10`} />
      {[[56, 56], [167, 56], [56, 223], [167, 223]].map(([cx, cy]) => (
        <circle key={`${cx}-${cy}`} cx={cx} cy={cy} r="14" fill="#000" />
      ))}
      <circle cx="-1" cy={h - 1} r="3" fill="#fff" stroke="none" />
    </g>
  );
}

function Drawing() {
  return (
    <div className="relative min-w-0 flex-1 overflow-hidden bg-black">
      <svg className="absolute inset-0 h-full w-full" aria-label="Nesting result">
        <g stroke="#b5b5b5" fill="none">
          <rect x="37.500" y="93.500" width="11" height="11" />
          <path d="M43.500 93v65M49 99.500h54" />
        </g>
        <g fill="#d5d5d5" fontSize="12">
          <text x="97" y="96">Y</text>
          <text x="33" y="160">X</text>
        </g>
        <path d="M0 288.500h21" stroke="#9999ff" />
        <path d="M235 153.500h4000M235.500 153v4000" stroke="#c0c2c5" />
        <path d="M235 154.500h4000" stroke="#c0c2c5" strokeDasharray="18 6" />
        <Plate x={235.5} y={188.5} leftEdge="#b9bfc9" />
        <Plate x={720.5} y={193.5} leftEdge="#00ff00" />
        <path d="M235 142v7M235 157v9M224 153h7M239 153h7" stroke="#fff" strokeWidth="2" />
        <circle cx="235" cy="153" r="2" fill="#c8103c" />
      </svg>
      <div className="relative flex justify-between whitespace-nowrap pl-[3px] pr-5 pt-[3px] leading-[26px]">
        <span className="text-[20px] text-white">Result1</span>
        <span className="text-[19px] text-[#ffff00]">FS2000-SPCC-14.00-Oxygen</span>
      </div>
    </div>
  );
}

function Chevron({ dir, tone }: { dir: 'up' | 'down' | 'left' | 'right'; tone: string }) {
  const d = { up: 'M1 7l4-4 4 4', down: 'M1 3l4 4 4-4', left: 'M7 1L3 5l4 4', right: 'M3 1l4 4-4 4' }[dir];
  return (
    <svg width="10" height="10" viewBox="0 0 10 10" fill="none" className={`shrink-0 ${tone}`} aria-hidden="true">
      <path d={d} stroke="currentColor" strokeWidth="2" />
    </svg>
  );
}

/* ---------- tool bar under the drawing ---------- */

const arrowTurns = { up: 0, left: -90, right: 90, down: 180 };
const MoveArrow = ({ dir }: { dir: keyof typeof arrowTurns }) => (
  <Pic w={14} h={14}>
    <path transform={`rotate(${arrowTurns[dir]} 7 7)`} d="M7 1l6 6H9.500v6h-5V7H1z" fill="#d3d7dd" stroke="#b4b9bf" />
  </Pic>
);
const Rotate = ({ cw }: { cw?: boolean }) => (
  <Pic w={15} h={14}>
    <g transform={cw ? 'translate(15 0) scale(-1 1)' : undefined}>
      <path d="M2 7a5.500 5.500 0 1 1 7 5.300" stroke="#b4b9bf" strokeWidth="1.500" /><path d="M0 5l2 4 4-3" stroke="#b4b9bf" />
    </g>
  </Pic>
);
const Quarter = ({ cw }: { cw?: boolean }) => (
  <Pic w={16} h={13}>
    <g transform={cw ? 'translate(16 0) scale(-1 1)' : undefined} stroke="#b4b9bf">
      <path d="M4.500 3v9H1z" fill="#d3d7dd" /><path d="M6.500 7v5.500h9z" /><path d="M7 3c3-2 6 0 6 4M7 0v4h3" />
    </g>
  </Pic>
);
const BestIcon = () => (
  <Pic w={16} h={17}>
    <path d="M0 0h16v17H0z" fill="#d3d7dd" />
    <path d="M4 3h5a3 3 0 0 1 0 6H7M6 1L4 3l2 2" stroke="#a4aab0" />
    <text x="8" y="16" fontSize="6" textAnchor="middle" fill="#8f959b">BEST</text>
  </Pic>
);
const FlipIcon = () => (
  <Pic w={15} h={13}><path d="M5.500 2v10H1zM9.500 2v10H14z" stroke="#b4b9bf" /><path d="M7.500 0v13" stroke="#b4b9bf" strokeDasharray="2 1" /></Pic>
);
const ResetIcon = () => (
  <Pic w={15} h={14}><circle cx="7" cy="6.500" r="6" fill="#d3d7dd" stroke="#c3c8cd" /><path d="M8 8c3-2 6 0 5 3s-4 2-5 1M8 6v3h3" stroke="#8f959b" /></Pic>
);

function Action({ w, icon, label }: { w: string; icon: React.ReactNode; label: string }) {
  return (
    <button type="button" disabled className={`flex shrink-0 items-center gap-1 whitespace-nowrap text-[13px] text-[#75797d] ${w}`}>
      {icon}
      {label}
    </button>
  );
}
const Divider = () => <span className="mx-[3px] h-[22px] w-px shrink-0 bg-[#a3a7ab]" />;

function AdjustBar() {
  return (
    <div className="flex h-[29px] shrink-0 items-center overflow-hidden pb-[2px] pl-[3px] text-[12px]">
      <Pic w={3} h={15}><path d="M1.500 0v15" stroke="#8f9296" strokeWidth="3" strokeDasharray="1 1" /></Pic>
      <div className="flex">
        {(['up', 'left', 'right', 'down'] as const).map((d) => (
          <button key={d} type="button" disabled aria-label={`Move ${d}`} className="flex w-[23px] justify-center"><MoveArrow dir={d} /></button>
        ))}
      </div>
      <Choice label="Fine-tune" labelClass="ml-[6px] w-[59px]" value="1" className="h-5 w-[58px]" />
      <Divider />
      <span className="w-[2px] shrink-0" />
      <Action w="w-[112px]" icon={<Rotate />} label="CCW Rotate(A)" />
      <Action w="w-[107px]" icon={<Rotate cw />} label="CW Rotate(D)" />
      <Choice label="Rotate Angle" labelClass="w-[81px]" value="10°" className="h-5 w-[50px]" />
      <Divider />
      <span className="w-[2px] shrink-0" />
      <Action w="w-[95px]" icon={<Quarter />} label="CCW 90°(S)" />
      <Action w="w-[91px]" icon={<Quarter cw />} label="CW 90°(W)" />
      <Action w="w-[127px]" icon={<BestIcon />} label="Rotate to best(Q)" />
      <Action w="w-[64px]" icon={<FlipIcon />} label="Flip(M)" />
      <Action w="w-[72px]" icon={<ResetIcon />} label="Reset(O)" />
      <Divider />
      <button type="button" aria-pressed="true" className="h-[22px] w-[74px] shrink-0 whitespace-nowrap border border-[#0b62cc] bg-[#d5dae3]">Auto attach</button>
      <Choice label="Attach Radius" labelClass="ml-[5px] w-[84px]" value="20" className="h-5 w-[76px]" />
      <button type="button" aria-label="More tools" className="ml-auto mr-[3px] flex flex-col items-center gap-[5px]">
        <Pic w={9} h={7}><path d="M1 0l3 3.500L1 7M5 0l3 3.500L5 7" stroke="#000" strokeWidth="1.300" /></Pic>
        <Caret tone="text-black" />
      </button>
    </div>
  );
}

const LOG = ['Command: Manual Nest', '*Cancel*', 'Command: Import Standard Parts', 'Command: Manual Nest', '*Cancel*', 'Command: Modify Nested Qty', 'Command: Manual Nest'];

function Console() {
  const [tab, setTab] = useState('Draw');
  const tabClass = (name: string) =>
    `flex h-[19px] items-center whitespace-nowrap pl-[3px] pr-[2px] ${tab === name ? 'border border-b-0 border-[#6b6f73] bg-[#a6c9ef]' : ''}`;
  return (
    <section className="ml-[6px] flex h-[145px] shrink-0 flex-col border-r-2 border-b-2 border-[#a3a5a8] text-[12px]">
      <div className="flex h-[23px] items-end border-b border-[#1d2733]">
        <div role="tablist" className="flex w-[241px] items-end pl-3">
          <button role="tab" type="button" aria-selected={tab === 'Draw'} onClick={() => setTab('Draw')} className={tabClass('Draw')}>
            <Pic w={16} h={16}>
              <path d="M1 1v10h10z" fill="#8fb8ee" stroke="#1d4fb0" strokeWidth="1.400" />
              <path d="M6 9l7-9 2 2-6 8-4 1z" fill="#f0a030" stroke="#a04010" strokeWidth=".8" />
              <path d="M1 12h14v3.500H1z" fill="#f5d060" stroke="#80601c" strokeWidth=".8" />
            </Pic>
            Draw
          </button>
          <button role="tab" type="button" aria-selected={tab === 'System'} onClick={() => setTab('System')} className={tabClass('System')}>
            <Pic w={16} h={16}>
              <path d="M2 2h10v13.500H2z" fill="#fff" stroke="#0b62cc" />
              <path d="M3 1h9l4 5-4 3H5L3 5z" fill="#0f7be0" />
              <path d="M4 10h6M4 12.500h6" stroke="#8fa8c8" />
            </Pic>
            System
          </button>
          <span className="mb-[3px] h-3 w-px bg-[#8f9296]" />
        </div>
        <div className="flex flex-1 items-center justify-between pb-2 pl-1 pr-px">
          <Chevron dir="left" tone="text-[#b5bcc4]" />
          <Chevron dir="right" tone="text-[#b5bcc4]" />
        </div>
      </div>
      <div className="flex min-h-0 flex-1">
        <div className="flex min-w-0 flex-1 flex-col">
          <div role="log" className="mt-[5px] flex min-h-0 flex-1 flex-col justify-end overflow-hidden pl-1 leading-[15px]">
            {LOG.map((line, i) => <p key={i} className="shrink-0">{line}</p>)}
          </div>
          <div className="flex h-[18px] shrink-0 items-center justify-between px-[6px] pr-[2px]">
            <Chevron dir="left" tone="text-[#6b6b6b]" />
            <Chevron dir="right" tone="text-[#6b6b6b]" />
          </div>
        </div>
        <div className="flex w-[22px] flex-col items-center pb-[21px] pt-[9px]">
          <Chevron dir="up" tone="text-black" />
          <span className="mt-auto mb-[6px] h-[25px] w-[11px] rounded-full bg-[#cbcccf]" />
          <Chevron dir="down" tone="text-black" />
        </div>
      </div>
    </section>
  );
}

/* ---------- nest results ---------- */

function RowIcons({ tone }: { tone: string }) {
  return (
    <div className={`ml-auto flex flex-col gap-[6px] self-start pr-[6px] pt-[3px] ${tone}`}>
      <Pic w={14} h={13}><path d="M5 5.500H2.500L7 1l4.500 4.500H9V9H5zM.7 7.500v4.800h12.600V7.500" stroke="currentColor" strokeWidth="1.200" /></Pic>
      <Pic w={14} h={14}><path d="M.7.700h12.600v12.600H.7zM7 .7v4H4v5h4v3.600M13 5H9v3h4" stroke="currentColor" strokeWidth="1.200" /></Pic>
    </div>
  );
}

function NestPanel() {
  return (
    <aside className="flex w-[280px] shrink-0 flex-col overflow-hidden">
      <h2 className="h-[21px] text-center text-[11px] leading-[22px] text-[#0b72d9]">Nest(2,Selected:0,All:2)</h2>
      <div className="flex h-[35px] items-center pb-px pl-2">
        <ToolDrop label="Add nest"><Plus /></ToolDrop>
        <ToolDrop label="Remove nest" tone="text-[#a9a9a9]"><Minus /></ToolDrop>
        <span className="w-[9px]" />
        <ToolDrop label="Select nests" gap="w-[21px]"><Checklist /></ToolDrop>
        <ToolDrop label="Sort nests" gap="w-[22px]"><SortBars up /></ToolDrop>
        <ToolDrop label="Save" tone="text-[#a9a9a9]"><SaveIcon /></ToolDrop>
      </div>
      <ul className="text-[12px] text-[#6b6460]">
        <li className="flex h-20 bg-[#a6c9ef]">
          <span className="pt-[26px]"><CheckBox label="Result1" /></span>
          <span className="ml-2 pt-7">
            <Pic w={60} h={16}>
              <rect x=".5" y=".5" width="58" height="14" stroke="#000" strokeDasharray="9 4 2 4" />
              <rect x="1" y="1.500" width="4" height="5" fill="#4a6af0" stroke="#000" strokeWidth="2" />
              <rect x="12" y="1.500" width="4" height="5" fill="#4a6af0" stroke="#000" strokeWidth="2" />
            </Pic>
          </span>
          <div className="ml-[3px] w-28 whitespace-nowrap leading-4">
            <p className="h-6 pt-[2px] font-bold">Result1</p>
            <p>2260.00x9300.00</p>
            <p className="flex justify-between"><span>2 Part(s)</span><span>Qty1</span></p>
            <p>Utilization:7.31%</p>
          </div>
          <RowIcons tone="text-white" />
        </li>
        <li className="flex h-20">
          <span className="pt-[26px]"><CheckBox label="Result2" /></span>
          <span className="ml-2 pt-4">
            <Pic w={60} h={40}><rect x=".5" y=".5" width="58" height="38" stroke="#000" strokeDasharray="9 4 2 4" /></Pic>
          </span>
          <div className="ml-[3px] w-28 whitespace-nowrap leading-4">
            <p className="h-6 pt-[2px] font-bold">Result2</p>
            <p>1690.00x2520.00</p>
            <p className="text-right">Qty1</p>
          </div>
          <RowIcons tone="text-[#a9abad]" />
        </li>
      </ul>
    </aside>
  );
}

function InputMethodBar() {
  return (
    <div className="absolute right-0 top-[686px] flex h-8 w-[285px] items-center rounded-lg border border-[#ccd6dc] bg-[#fafafa] pl-[9px] pr-[6px] shadow-[-2px_1px_1px_#d7e9ee]">
      <Pic w={20} h={17}><path d="M17 2C10 1 4 2 4 5.500s10 2.500 11 5.500-6 4-12 3" stroke="#ff7316" strokeWidth="4" /></Pic>
      <span className="mx-[9px] h-[18px] w-px bg-[#ccd2dc]" />
      <div className="flex flex-1 items-center justify-between">
        <button type="button" aria-label="Chinese input" className="w-4 font-['Noto_Sans_CJK_SC',sans-serif] text-[17px] font-bold leading-[20px]">中</button>
        <button type="button" aria-label="Punctuation"><Pic w={13} h={16}><circle cx="3.500" cy="4" r="2.200" stroke="#111" strokeWidth="1.400" /><path d="M8 10.500a2 2 0 1 1 3 2L8 15.500" fill="#111" stroke="#111" /></Pic></button>
        <button type="button" aria-label="Emoji"><Pic w={18} h={17}><circle cx="9" cy="8.500" r="7.500" stroke="#111" strokeWidth="1.600" /><path d="M5 9.500c1 4 7 4 8 0M6.500 5v2M11.500 5v2" stroke="#111" strokeWidth="1.500" /></Pic></button>
        <button type="button" aria-label="Voice"><Pic w={15} h={17}><rect x="4" y="1" width="7" height="10" rx="3.500" stroke="#111" strokeWidth="1.600" /><path d="M1 7c0 8 13 8 13 0M7.500 13v4" stroke="#111" strokeWidth="1.600" /></Pic></button>
        <button type="button" aria-label="Keyboard"><Pic w={17} h={16}><rect x="1" y="1" width="15" height="14" rx="1" stroke="#111" strokeWidth="1.600" /><path d="M4.500 5h8.500M4.500 8h8.500" stroke="#111" strokeWidth="1.500" strokeDasharray="1.500 2" /><path d="M5 11.500h7" stroke="#111" strokeWidth="1.300" /></Pic></button>
        <button type="button" aria-label="Skins"><Pic w={18} h={16}><path d="M6 1L1 4l1.500 4L4.500 7v8h9V7l2 1L17 4l-5-3c-1 2.500-5 2.500-6 0z" stroke="#111" strokeWidth="1.600" strokeLinejoin="round" /></Pic></button>
        <button type="button" aria-label="Toolbox"><Pic w={17} h={17}><g stroke="#22223a" strokeWidth="1.700"><rect x="1" y="1" width="5.500" height="5.500" /><circle cx="13" cy="3.700" r="2.800" /><rect x="1" y="10" width="5.500" height="5.500" /><rect x="10.300" y="10" width="5.500" height="5.500" /></g></Pic></button>
        <button type="button" aria-label="Assistant"><Pic w={20} h={18}><path d="M1 12a8 6 0 0 0 16 0" stroke="#ead0f0" /><path d="M0 6l13-3 1 5-12 3z" fill="#f0702c" /><path d="M1 6h6l-3 6z" fill="#2a2a2a" /><path d="M18 2l1 3h1l-2 3-1-3h-2z" fill="#ffdc50" /></Pic></button>
      </div>
    </div>
  );
}

export default function App() {
  return (
    <div className="relative flex h-screen flex-col overflow-hidden bg-[#fafafa] font-['DejaVu_Sans_Condensed','DejaVu_Sans',sans-serif] text-[12px] text-black">
      <Ribbon />
      <svg className="absolute left-[34px] top-0" width="18" height="8" fill="none" aria-hidden="true"><path d="M1 0c1 4 4 7 8 7s7-3 7-7" stroke="#333" /></svg>
      <div className="h-[3px] shrink-0 bg-[#d7e9ee]" />
      <main className="flex min-h-0 flex-1">
        <PartsPanel />
        <div className="flex min-w-0 flex-1 flex-col pl-1">
          <div className="flex min-h-0 flex-1">
            <div className="flex min-w-0 flex-1 flex-col">
              <TopRuler />
              <div className="flex min-h-0 flex-1">
                <SideRuler />
                <Drawing />
              </div>
            </div>
            <div className="flex w-[23px] shrink-0 flex-col items-center justify-between py-1">
              <Chevron dir="up" tone="text-[#b5bcc4]" />
              <Chevron dir="down" tone="text-[#b5bcc4]" />
            </div>
          </div>
          <AdjustBar />
          <Console />
        </div>
        <NestPanel />
      </main>
      <footer className="flex h-[25px] shrink-0 justify-end border-t border-[#9a9aae] bg-[linear-gradient(to_bottom,#d7e9ee_3px,#d5dae3_3px,#d5dae3_12px,#c9cacc_12px,#c9cacc_20px,#b5bec5_20px)] text-[11px]">
        <span className="flex w-[105px] items-center justify-center border-l border-[#9fa3a7]">-884.16, 485.19</span>
        <span className="flex w-[127px] items-center border-l border-[#9fa3a7] pl-[7px] text-[12px]">
          <Choice label="Fine-tune" labelClass="w-14 text-[#2f4674]" value="1" tone="text-[#6b6b6b]" className="h-[21px] w-[62px] border border-[#d5dae3] bg-[#fdfdfd] pl-[2px]" />
        </span>
      </footer>
      <div className="flex h-[6px] shrink-0 bg-[#222c35]">
        <div className="ml-[43px] flex w-[287px] justify-end overflow-hidden border border-b-0 border-[#c3c8cc] bg-[#fafafa] pr-[8px]">
          <svg width="56" height="6" aria-hidden="true"><ellipse cx="26" cy="9" rx="26" ry="9" fill="#d5dae3" /><path d="M3 6c4-4 8-5 14-4l-3 4z" fill="#a5eef2" /><path d="M22 6l6-4 3 4zM34 6l4-3 2 3z" fill="#5f9a3c" /><path d="M45 6l6-6" stroke="#555" /></svg>
        </div>
        <div className="ml-[541px] w-12 bg-[#4a525a]" />
      </div>
      <InputMethodBar />
    </div>
  );
}
